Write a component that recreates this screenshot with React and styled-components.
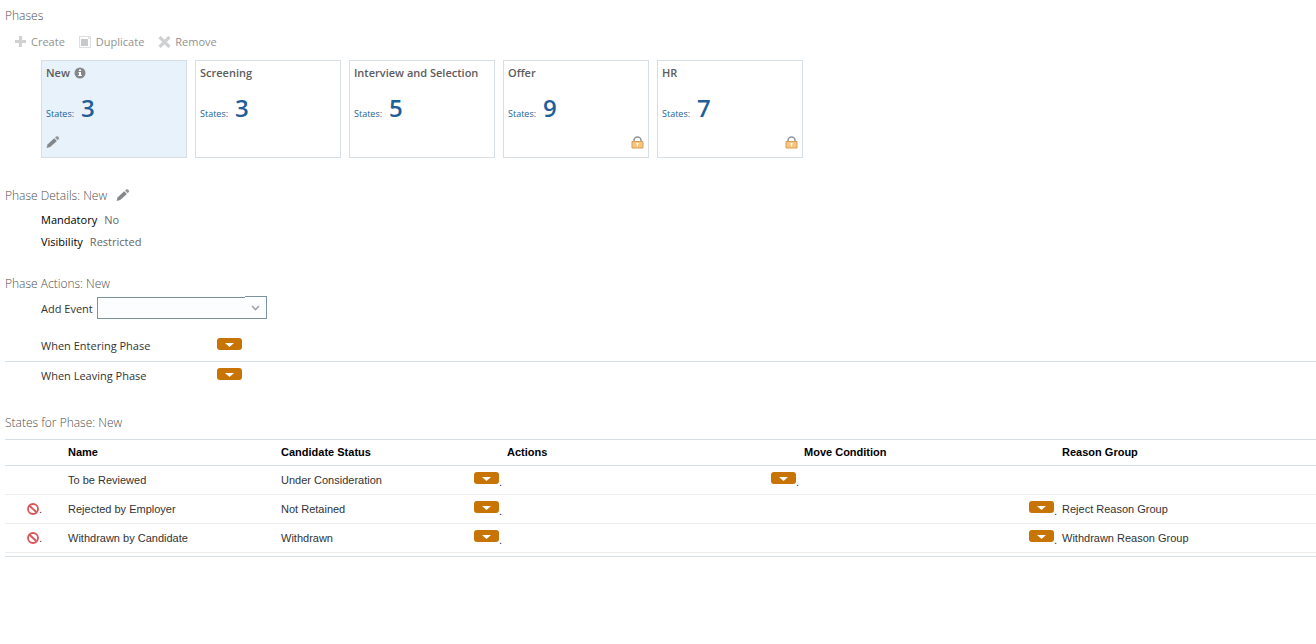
import React from 'react'
import styled, { createGlobalStyle } from 'styled-components'
import { useState } from 'react'

const GlobalStyle = createGlobalStyle`
    * {
        box-sizing : border-box;
    }
    body {
        margin : 0;
        background : #fff;
        color : #333;
        font-family : "Open Sans", "Noto Sans", sans-serif;
        font-size : 11px;
    }
`
const Page = styled.main`
    padding : 3px 0 0 5px;
`
const Section = styled.section`
    margin-bottom : ${(p) => p.$gap || 0}px;
`
const Heading = styled.h2`
    margin : 0;
    height : 24px;
    display : flex;
    align-items : center;
    gap : 9px;
    font-size : 12px;
    font-weight : 300;
    color : #4f4f4f;
`
const Toolbar = styled.div`
    display : flex;
    align-items : center;
    gap : 14px;
    height : 29px;
    padding-left : 9px;
    margin-bottom : 4px;
`
const ToolButton = styled.button`
    display : flex;
    align-items : center;
    gap : 4px;
    padding : 0;
    border : none;
    background : none;
    font : inherit;
    font-weight : 500;
    color : #929292;
`
const Cards = styled.div`
    display : flex;
    flex-wrap : wrap;
    gap : 8px;
    padding-left : 36px;
`
const Card = styled.article`
    display : flex;
    flex-direction : column;
    width : 146px;
    height : 98px;
    padding : 3px 4px 8px;
    border : 1px solid #d6dfe6;
    background : ${(p) => (p.$active ? "#e7f2fb" : "#fff")};
`
const CardTitle = styled.h3`
    display : flex;
    align-items : center;
    gap : 4px;
    margin : 0;
    height : 17px;
    font-size : 11px;
    font-weight : 600;
    color : #5c5c5c;
    white-space : nowrap;
`
const StateCount = styled.p`
    display : flex;
    align-items : baseline;
    gap : 7px;
    margin : 10px 0 0;
    line-height : 34px;
    font-size : 9px;
    font-weight : 500;
    color : #1f5f99;
    strong{
        font-size : 24px;
        font-weight : 600;
    }
`
const CardFoot = styled.div`
    display : flex;
    justify-content : ${(p) => (p.$right ? "flex-end" : "flex-start")};
    margin-top : auto;
`
const IconButton = styled.button`
    display : flex;
    padding : 0;
    border : none;
    background : none;
    cursor : pointer;
`
const Details = styled.dl`
    margin : 0;
    padding : 1px 0 0 36px;
`
const Detail = styled.div`
    display : flex;
    align-items : center;
    gap : 7px;
    height : 22px;
    dt{
        color : #000;
        font-weight : 500;
    }
    dd{
        margin : 0;
        color : #666;
    }
`
const EventRow = styled.div`
    display : flex;
    align-items : center;
    gap : 4px;
    height : 26px;
    margin-bottom : 11px;
    padding-left : 36px;
`
const SelectBox = styled.div`
    position : relative;
    width : 170px;
    height : 22px;
`
const Select = styled.select`
    display : block;
    width : 100%;
    height : 22px;
    padding : 0 24px 0 4px;
    border : 1px solid #7d92a1;
    border-radius : 0;
    background : #fcfdfe;
    font : inherit;
    appearance : none;
`
const SelectArrow = styled.span`
    position : absolute;
    top : -1px;
    right : 0;
    display : flex;
    align-items : center;
    justify-content : center;
    width : 22px;
    height : 23px;
    border : 1px solid #7d92a1;
    border-left : none;
    background : #fcfdfe;
    pointer-events : none;
`
const PhaseRow = styled.div`
    display : grid;
    grid-template-columns : 176px 1fr;
    align-items : center;
    height : 30px;
    padding : 0 0 2px 36px;
    border-bottom : 1px solid ${(p) => (p.$line ? "#d6dfe6" : "transparent")};
`
const MenuButton = styled.button`
    display : inline-flex;
    align-items : center;
    justify-content : center;
    width : 25px;
    height : 12px;
    margin-bottom : 4px;
    padding : 2px 0 0;
    border : none;
    border-radius : 3px;
    background : #c77405;
    cursor : pointer;
`
const TableBox = styled.div`
    margin-top : 5px;
    padding-bottom : 3px;
    border-bottom : 1px solid #d6dfe6;
    overflow : hidden;
`
const Table = styled.table`
    width : 100%;
    table-layout : fixed;
    border-collapse : separate;
    border-spacing : 0;
    border-top : 1px solid #d6dfe6;
    font-family : "Liberation Sans", Arial, sans-serif;
    th, td{
        padding : 0 0 0 5px;
        text-align : left;
        white-space : nowrap;
    }
    th{
        height : 26px;
        padding-bottom : 2px;
        border-bottom : 1px solid #d6dfe6;
        color : #000;
    }
    td{
        height : 29px;
        border-bottom : 1px solid #ebedef;
    }
`
const Col = styled.col`
    width : ${(p) => (p.$w ? p.$w + "px" : "auto")};
`
const IconCell = styled.span`
    display : flex;
    align-items : ${(p) => (p.$low ? "flex-end" : "center")};
    line-height : 12px;
    svg{
        flex : none;
    }
`

const columns = [17, 21, 20, 193, 20, 193, 33, 264, 33, 225, 33, 0]

const phases = [
    { name: "New", states: 3, active: true },
    { name: "Screening", states: 3 },
    { name: "Interview and Selection", states: 5 },
    { name: "Offer", states: 9, locked: true },
    { name: "HR", states: 7, locked: true },
]

const rows = [
    { name: "To be Reviewed", status: "Under Consideration", move: true },
    { name: "Rejected by Employer", status: "Not Retained", ends: true, reason: "Reject Reason Group" },
    { name: "Withdrawn by Candidate", status: "Withdrawn", ends: true, reason: "Withdrawn Reason Group" },
]

const PlusIcon = () => (
    <svg width="13" height="12" viewBox="0 0 13 12">
        <path d="M5 0h3v4h4v3H8v4H5V7H1V4h4z" fill="#cfd1d3" />
    </svg>
)

const DuplicateIcon = () => (
    <svg width="13" height="12" viewBox="0 0 13 12">
        <path d="M.5.5h11v11H.5z" fill="#fff" stroke="#dcddde" />
        <path d="M9.500 .5v2h2" fill="none" stroke="#dcddde" />
        <path d="M2 3h7v7H2z" fill="#c6c8ca" />
    </svg>
)

const RemoveIcon = () => (
    <svg width="13" height="12" viewBox="0 0 13 12">
        <path d="M1.500 1l10 10M11.500 1l-10 10" stroke="#cfd1d3" strokeWidth="3.200" />
    </svg>
)

const InfoIcon = () => (
    <svg width="12" height="12" viewBox="0 0 12 12">
        <circle cx="6" cy="6" r="5.500" fill="#85888b" />
        <path d="M5 2.500h2v1.500H5zM4.500 5H7v3h.800v1H4.300V8H5V6h-.5z" fill="#fff" />
    </svg>
)

const PencilIcon = () => (
    <svg width="14" height="14" viewBox="0 0 14 14">
        <path d="M.500 13l1.200-3.800L8.200 3.300l2.700 2.700-6.700 5.900z" fill="#85888b" />
        <path d="M9 2.600l1.200-1.100c.6-.5 1.200-.5 1.800 0l.8.8c.5.600.5 1.200 0 1.700l-1.200 1.200z" fill="#94979a" />
    </svg>
)

const LockIcon = () => (
    <svg width="13" height="13" viewBox="0 0 13 13">
        <path d="M3 6V4.200a3.500 3.200 0 0 1 7 0V6" fill="none" stroke="#8e9499" strokeWidth="1.500" />
        <path d="M1 5.500h11v6.500H1z" fill="#f9c47f" stroke="#d99d55" />
        <path d="M5.500 7h2v1.500H7v2H6v-2h-.5z" fill="#fff" />
    </svg>
)

const NoEntryIcon = () => (
    <svg width="12" height="12" viewBox="0 0 12 12">
        <circle cx="6" cy="6" r="5" fill="#fff" stroke="#d9565b" strokeWidth="1.800" />
        <path d="M2.500 2.700l7 6.600" stroke="#d9565b" strokeWidth="1.900" />
    </svg>
)

const ChevronIcon = () => (
    <svg width="9" height="6" viewBox="0 0 9 6">
        <path d="M1 1l3.500 3.500L8 1" fill="none" stroke="#a3a6a9" strokeWidth="1.600" />
    </svg>
)

const Menu = ({ label }) => (
    <MenuButton type="button" aria-label={label}>
        <svg width="9" height="4" viewBox="0 0 9 4">
            <path d="M0 0h9L4.500 4z" fill="#fff" />
        </svg>
    </MenuButton>
)

function App() {
    const [event, setEvent] = useState("")

    return (
        <>
            <GlobalStyle />
            <Page>
                <Section $gap={25}>
                    <Heading>Phases</Heading>
                    <Toolbar>
                        <ToolButton type="button"><PlusIcon />Create</ToolButton>
                        <ToolButton type="button"><DuplicateIcon />Duplicate</ToolButton>
                        <ToolButton type="button"><RemoveIcon />Remove</ToolButton>
                    </Toolbar>
                    <Cards>
                        {phases.map((e) => (
                            <Card key={e.name} $active={e.active}>
                                <CardTitle>{e.name}{e.active && <InfoIcon />}</CardTitle>
                                <StateCount>States: <strong>{e.states}</strong></StateCount>
                                <CardFoot $right={e.locked}>
                                    {e.active && <IconButton type="button" aria-label="Edit"><PencilIcon /></IconButton>}
                                    {e.locked && <LockIcon />}
                                </CardFoot>
                            </Card>
                        ))}
                    </Cards>
                </Section>

                <Section $gap={19}>
                    <Heading>
                        Phase Details: New
                        <IconButton type="button" aria-label="Edit"><PencilIcon /></IconButton>
                    </Heading>
                    <Details>
                        <Detail><dt>Mandatory</dt><dd>No</dd></Detail>
                        <Detail><dt>Visibility</dt><dd>Restricted</dd></Detail>
                    </Details>
                </Section>

                <Section $gap={18}>
                    <Heading>Phase Actions: New</Heading>
                    <EventRow>
                        <label htmlFor="event">Add Event</label>
                        <SelectBox>
                            <Select id="event" value={event} onChange={(e) => setEvent(e.target.value)}>
                                <option value=""></option>
                            </Select>
                            <SelectArrow><ChevronIcon /></SelectArrow>
                        </SelectBox>
                    </EventRow>
                    <PhaseRow $line>
                        <span>When Entering Phase</span>
                        <Menu label="Entering" />
                    </PhaseRow>
                    <PhaseRow>
                        <span>When Leaving Phase</span>
                        <Menu label="Leaving" />
                    </PhaseRow>
                </Section>

                <Section>
                    <Heading>States for Phase: New</Heading>
                    <TableBox>
                        <Table>
                            <colgroup>
                                {columns.map((w, i) => <Col key={i} $w={w} />)}
                            </colgroup>
                            <thead>
                                <tr>
                                    <th colSpan={3}></th>
                                    <th>Name</th>
                                    <th></th>
                                    <th>Candidate Status</th>
                                    <th></th>
                                    <th>Actions</th>
                                    <th></th>
                                    <th>Move Condition</th>
                                    <th></th>
                                    <th>Reason Group</th>
                                </tr>
                            </thead>
                            <tbody>
                                {rows.map((e) => (
                                    <tr key={e.name}>
                                        <td></td>
                                        <td>{e.ends && <IconCell><NoEntryIcon />.</IconCell>}</td>
                                        <td></td>
                                        <td>{e.name}</td>
                                        <td></td>
                                        <td>{e.status}</td>
                                        <td><IconCell $low><Menu label="Actions" />.</IconCell></td>
                                        <td></td>
                                        <td>{e.move && <IconCell $low><Menu label="Move condition" />.</IconCell>}</td>
                                        <td></td>
                                        <td>{e.reason && <IconCell $low><Menu label="Reason group" />.</IconCell>}</td>
                                        <td>{e.reason}</td>
                                    </tr>
                                ))}
                            </tbody>
                        </Table>
                    </TableBox>
                </Section>
            </Page>
        </>
    )
}

export default App
